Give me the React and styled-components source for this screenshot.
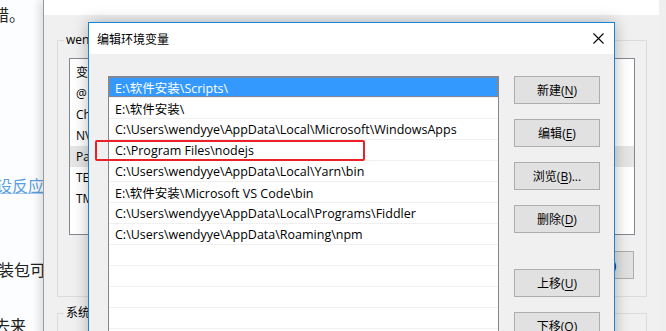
import React from 'react'
import styled, { createGlobalStyle } from 'styled-components'

const GlobalStyle = createGlobalStyle`
  html, body {
    margin: 0;
    padding: 0;
    overflow: hidden;
  }
  body {
    font-family: "Open Sans", "Noto Sans CJK SC", sans-serif;
    font-size: 12px;
    color: #000;
  }
`

const articleLines = [
  { text: '还不错。', gap: 4, end: 25 },
  { text: '假设反应', gap: 151, end: 44, link: true },
  { text: '安装包可', gap: 64, end: 46 },
  { text: '去来', gap: 36, end: 26 },
]

const userVars = ['变量', '@', 'ChocolateyInstall', 'NVM_HOME', 'Path', 'TEMP', 'TMP']

const paths = [
  'E:\\软件安装\\Scripts\\',
  'E:\\软件安装\\',
  'C:\\Users\\wendyye\\AppData\\Local\\Microsoft\\WindowsApps',
  'C:\\Program Files\\nodejs',
  'C:\\Users\\wendyye\\AppData\\Local\\Yarn\\bin',
  'E:\\软件安装\\Microsoft VS Code\\bin',
  'C:\\Users\\wendyye\\AppData\\Local\\Programs\\Fiddler',
  'C:\\Users\\wendyye\\AppData\\Roaming\\npm',
  '', '', '', '', '', '',
]

const actions = [
  { label: '新建', key: 'N' },
  { label: '编辑', key: 'E' },
  { label: '浏览', key: 'B', more: true },
  { label: '删除', key: 'D' },
  { label: '上移', key: 'U', spaced: true },
  { label: '下移', key: 'O' },
]

function App() {
  return (
    <>
      <GlobalStyle />
      <Desktop>
        <Article>
          {articleLines.map((line) => (
            <ArticleLine key={line.text} $gap={line.gap} $end={line.end} $link={line.link}>
              <span>{line.text}</span>
            </ArticleLine>
          ))}
        </Article>

        <EnvWindow>
          <TitleStrip />
          <WindowBody>
            <GroupBox>
              <legend>wendyye 的用户变量(U)</legend>
              <VarList>
                {userVars.map((name) => (
                  <VarRow key={name} $selected={name === 'Path'}>{name}</VarRow>
                ))}
              </VarList>
              <ButtonRow>
                <SmallButton>新建(N)...</SmallButton>
                <SmallButton>编辑(E)...</SmallButton>
                <SmallButton>删除(D)</SmallButton>
              </ButtonRow>
            </GroupBox>
            <GroupBox>
              <legend>系统变量(S)</legend>
            </GroupBox>
          </WindowBody>
          <NextWindow />
        </EnvWindow>

        <Dialog>
          <DialogTitle>
            <span>编辑环境变量</span>
            <CloseButton aria-label="关闭">
              <svg width="11" height="11" viewBox="0 0 11 11">
                <path d="M0.5 0.5 L10.5 10.5 M10.5 0.5 L0.5 10.5" stroke="#000" strokeWidth="1.1" fill="none" />
              </svg>
            </CloseButton>
          </DialogTitle>
          <DialogBody>
            <PathList>
              {paths.map((p, i) => (
                <PathRow key={i} $selected={i === 0}>
                  <span>{p}</span>
                </PathRow>
              ))}
            </PathList>
            <Actions>
              {actions.map((a) => (
                <ActionButton key={a.key} $spaced={a.spaced}>
                  {a.label}(<u>{a.key}</u>){a.more ? '...' : ''}
                </ActionButton>
              ))}
            </Actions>
          </DialogBody>
        </Dialog>

        <Highlight />
      </Desktop>
    </>
  )
}

export default App

const Desktop = styled.div`
  position: relative;
  width: 666px;
  height: 331px;
  overflow: hidden;
  background: #f0f0f0;
`

const Article = styled.div`
  position: absolute;
  left: 0;
  top: 0;
  width: 43px;
  height: 100%;
  background: #fcfdfe;
  overflow: hidden;
  display: flex;
  flex-direction: column;
  align-items: flex-start;
`

const ArticleLine = styled.div`
  direction: rtl;
  width: ${(p) => p.$end}px;
  margin-top: ${(p) => p.$gap}px;
  height: 20px;
  line-height: 20px;
  font-size: 16px;
  white-space: nowrap;
  font-family: "Noto Sans CJK SC", sans-serif;

  span {
    display: inline-block;
    direction: ltr;
    color: ${(p) => (p.$link ? '#5b9fe0' : '#222')};
    text-decoration: ${(p) => (p.$link ? 'underline' : 'none')};
    text-decoration-color: #a9cbee;
  }
`

const EnvWindow = styled.div`
  position: absolute;
  left: 43px;
  top: 0;
  width: 617px;
  height: 360px;
  box-sizing: border-box;
  border-left: 1px solid #9a9a9a;
  border-right: 1px solid #c8c8c8;
  background: #f0f0f0;
  box-shadow: -4px 0 8px rgba(0, 0, 0, 0.12);
`

const TitleStrip = styled.div`
  height: 15px;
  background: #fff;
`

const WindowBody = styled.div`
  padding: 17px 12px 0 13px;
  display: flex;
  flex-direction: column;
  gap: 8px;
`

const GroupBox = styled.fieldset`
  margin: 0;
  padding: 10px 11px 17px 11px;
  border: 1px solid #dcdcdc;
  min-height: 20px;

  legend {
    margin-left: -5px;
    padding: 0 2px;
    font-size: 12px;
    line-height: 16px;
    white-space: nowrap;
  }
`

const VarList = styled.div`
  height: 172px;
  border: 1px solid #828790;
  background: #fff;
  padding-top: 3px;
`

const VarRow = styled.div`
  height: 21px;
  line-height: 21px;
  padding-left: 6px;
  background: ${(p) => (p.$selected ? '#e5e5e5' : 'transparent')};
  white-space: nowrap;
`

const ButtonRow = styled.div`
  margin-top: 16px;
  display: flex;
  justify-content: flex-end;
  gap: 10px;
  padding-right: 1px;
`

const SmallButton = styled.div`
  width: 73px;
  height: 26px;
  border: 1px solid #adadad;
  background: #e1e1e1;
  display: flex;
  align-items: center;
  justify-content: center;
`

const NextWindow = styled.div`
  position: absolute;
  left: 100%;
  top: 0;
  width: 20px;
  height: 100%;
  background: #efefef;
`

const Dialog = styled.div`
  position: absolute;
  left: 88px;
  top: 22px;
  width: 527px;
  height: 330px;
  box-sizing: border-box;
  border: 1px solid #1883d7;
  background: #f0f0f0;
  box-shadow: 0 0 14px rgba(0, 0, 0, 0.28);
`

const DialogTitle = styled.div`
  height: 31px;
  background: #fff;
  display: flex;
  align-items: center;
  justify-content: space-between;
  padding: 0 10px 0 8px;

  span {
    font-size: 12px;
    padding-top: 1px;
  }
`

const CloseButton = styled.div`
  width: 11px;
  height: 11px;
  display: flex;
`

const DialogBody = styled.div`
  display: flex;
  align-items: flex-start;
  gap: 15px;
  padding: 22px 0 0 19px;
`

const PathList = styled.div`
  width: 389px;
  height: 300px;
  border: 1px solid #828790;
  background: #fff;
  overflow: hidden;
  font-size: 12.5px;
`

const PathRow = styled.div`
  height: 20px;
  border-bottom: 1px solid #f0f0f0;
  display: flex;
  align-items: stretch;

  span {
    flex: 1;
    display: flex;
    align-items: center;
    padding-left: 6px;
    white-space: nowrap;
    background: ${(p) => (p.$selected ? '#3399ff' : 'transparent')};
    color: ${(p) => (p.$selected ? '#fff' : '#000')};
    outline: ${(p) => (p.$selected ? '1px dotted #c87a3c' : 'none')};
    outline-offset: -1px;
  }
`

const Actions = styled.div`
  width: 86px;
  display: flex;
  flex-direction: column;
  gap: 15px;
`

const ActionButton = styled.div`
  height: 26px;
  border: 1px solid #adadad;
  background: #e1e1e1;
  display: flex;
  align-items: center;
  justify-content: center;
  margin-top: ${(p) => (p.$spaced ? '21px' : '0')};

  u {
    text-underline-offset: 2px;
  }
`

const Highlight = styled.div`
  position: absolute;
  left: 95px;
  top: 140px;
  width: 266px;
  height: 17px;
  border: 2px solid #ec2027;
  border-radius: 2px;
`
